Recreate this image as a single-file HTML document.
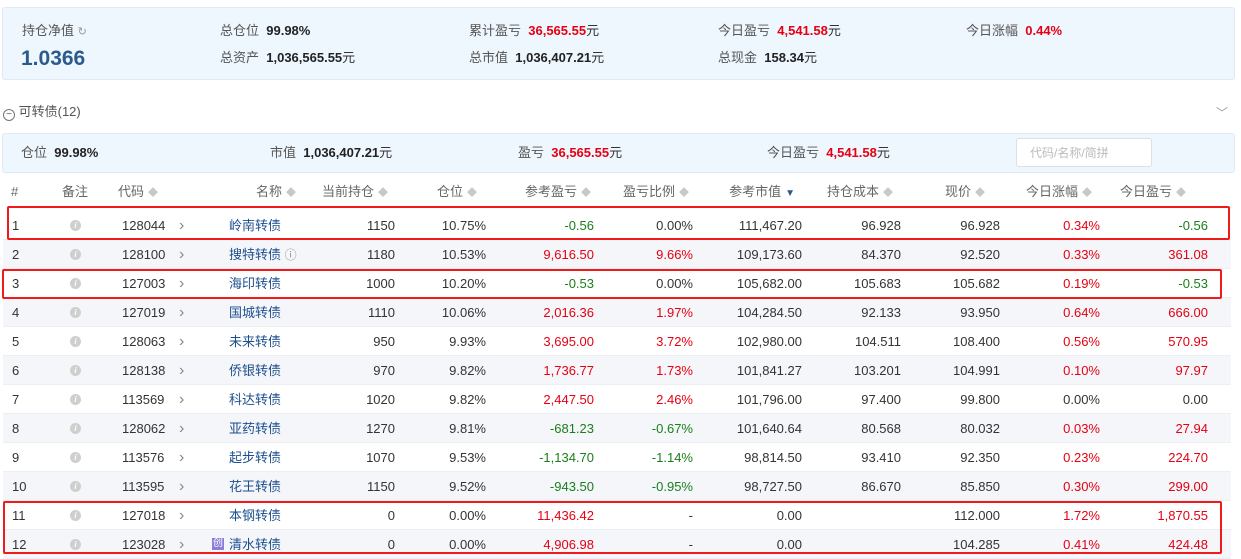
<!DOCTYPE html>
<html><head><meta charset="utf-8"><style>
*{margin:0;padding:0;box-sizing:border-box}
body{width:1241px;height:556px;overflow:hidden;background:#fff;font-family:"Liberation Sans","Noto Sans CJK SC",sans-serif;font-size:13px;color:#333;position:relative;line-height:15px}
.a{position:absolute;white-space:nowrap}
.lb{color:#555}
.b{font-weight:bold;color:#222}
.r{color:#e60012}
.g{color:#1a7f1a}
.panel{position:absolute;background:#eef6fe;border:1px solid #e0ebf5;border-radius:3px}
.row{position:absolute;left:3px;width:1228px;height:29px;border-bottom:1px solid #eceef2}
.row.e{background:#f4f6fa}
.row span{position:absolute;top:7px;white-space:nowrap;line-height:15px}
.rt{text-align:right}
.nm{color:#1d4f8c}
.info{display:block;width:11px;height:11px;border-radius:50%;background:#cfcfcf;color:#fff;font-size:8px;line-height:11px;text-align:center;font-style:italic;font-weight:bold}
.hd{position:absolute;top:184px;color:#666}
.ar{color:#c8c8c8;font-size:10px;margin-left:4px}
.box{position:absolute;border:2px solid #f01a1a;border-radius:2px}
</style></head><body>
<div class="panel" style="left:2px;top:7px;width:1233px;height:73px"></div>
<div class="a lb" style="left:22px;top:23px">持仓净值 <span style="color:#999;font-size:11px">↻</span></div>
<div class="a" style="left:21px;top:47px;font-size:21px;line-height:24px;font-weight:bold;color:#2a5b8c">1.0366</div>
<div class="a" style="left:220px;top:23px"><span class="lb">总仓位</span>&nbsp; <span class="b">99.98%</span></div>
<div class="a" style="left:220px;top:50px"><span class="lb">总资产</span>&nbsp; <span class="b">1,036,565.55</span>元</div>
<div class="a" style="left:469px;top:23px"><span class="lb">累计盈亏</span>&nbsp; <span class="b r">36,565.55</span>元</div>
<div class="a" style="left:469px;top:50px"><span class="lb">总市值</span>&nbsp; <span class="b">1,036,407.21</span>元</div>
<div class="a" style="left:718px;top:23px"><span class="lb">今日盈亏</span>&nbsp; <span class="b r">4,541.58</span>元</div>
<div class="a" style="left:718px;top:50px"><span class="lb">总现金</span>&nbsp; <span class="b">158.34</span>元</div>
<div class="a" style="left:966px;top:23px"><span class="lb">今日涨幅</span>&nbsp; <span class="b r">0.44%</span></div>

<div class="a lb" style="left:3px;top:104px"><span style="display:inline-block;width:12px;height:12px;border:1px solid #777;border-radius:50%;font-size:10px;line-height:9px;text-align:center;vertical-align:-1px">−</span> 可转债(12)</div>
<div class="a" style="left:1216px;top:106px;color:#999;font-size:12px">﹀</div>

<div class="panel" style="left:2px;top:133px;width:1233px;height:40px"></div>
<div class="a" style="left:21px;top:145px"><span class="lb">仓位</span>&nbsp; <span class="b">99.98%</span></div>
<div class="a" style="left:270px;top:145px"><span class="lb">市值</span>&nbsp; <span class="b">1,036,407.21</span>元</div>
<div class="a" style="left:518px;top:145px"><span class="lb">盈亏</span>&nbsp; <span class="b r">36,565.55</span>元</div>
<div class="a" style="left:767px;top:145px"><span class="lb">今日盈亏</span>&nbsp; <span class="b r">4,541.58</span>元</div>
<div class="a" style="left:1016px;top:138px;width:136px;height:29px;background:#fff;border:1px solid #dcdfe6;border-radius:3px;color:#bbb;padding:7px 0 0 13px;font-size:12px">代码/名称/简拼</div>

<div class="hd" style="left:11px">#</div>
<div class="hd" style="left:62px">备注</div>
<div class="hd" style="left:118px">代码<span class="ar">◆</span></div>
<div class="hd rt" style="right:945px">名称<span class="ar">◆</span></div>
<div class="hd rt" style="right:853px">当前持仓<span class="ar">◆</span></div>
<div class="hd rt" style="right:764px">仓位<span class="ar">◆</span></div>
<div class="hd rt" style="right:650px">参考盈亏<span class="ar">◆</span></div>
<div class="hd rt" style="right:552px">盈亏比例<span class="ar">◆</span></div>
<div class="hd rt" style="right:446px">参考市值<span class="ar" style="color:#2a5b8c">▼</span></div>
<div class="hd rt" style="right:348px">持仓成本<span class="ar">◆</span></div>
<div class="hd rt" style="right:256px">现价<span class="ar">◆</span></div>
<div class="hd rt" style="right:149px">今日涨幅<span class="ar">◆</span></div>
<div class="hd rt" style="right:55px">今日盈亏<span class="ar">◆</span></div>

<div id="rows"></div>
<script>
var d=[
["1","128044","岭南转债","1150","10.75%","-0.56","0.00%","111,467.20","96.928","96.928","0.34%","-0.56","g","","r","g"],
["2","128100","搜特转债","1180","10.53%","9,616.50","9.66%","109,173.60","84.370","92.520","0.33%","361.08","r","r","r","r"],
["3","127003","海印转债","1000","10.20%","-0.53","0.00%","105,682.00","105.683","105.682","0.19%","-0.53","g","","r","g"],
["4","127019","国城转债","1110","10.06%","2,016.36","1.97%","104,284.50","92.133","93.950","0.64%","666.00","r","r","r","r"],
["5","128063","未来转债","950","9.93%","3,695.00","3.72%","102,980.00","104.511","108.400","0.56%","570.95","r","r","r","r"],
["6","128138","侨银转债","970","9.82%","1,736.77","1.73%","101,841.27","103.201","104.991","0.10%","97.97","r","r","r","r"],
["7","113569","科达转债","1020","9.82%","2,447.50","2.46%","101,796.00","97.400","99.800","0.00%","0.00","r","r","",""],
["8","128062","亚药转债","1270","9.81%","-681.23","-0.67%","101,640.64","80.568","80.032","0.03%","27.94","g","g","r","r"],
["9","113576","起步转债","1070","9.53%","-1,134.70","-1.14%","98,814.50","93.410","92.350","0.23%","224.70","g","g","r","r"],
["10","113595","花王转债","1150","9.52%","-943.50","-0.95%","98,727.50","86.670","85.850","0.30%","299.00","g","g","r","r"],
["11","127018","本钢转债","0","0.00%","11,436.42","-","0.00","","112.000","1.72%","1,870.55","r","","r","r"],
["12","123028","清水转债","0","0.00%","4,906.98","-","0.00","","104.285","0.41%","424.48","r","","r","r"]];
var h="";
d.forEach(function(x,i){
var t=211+i*29;
h+='<div class="row'+(i%2?' e':'')+'" style="top:'+t+'px">'+
'<span style="left:9px">'+x[0]+'</span>'+
'<span style="left:67px;top:9px"><i class="info">i</i></span>'+
'<span style="left:119px">'+x[1]+'</span>'+
'<span style="left:176px;color:#888;font-size:16px">›</span>'+
(i==11?'<span style="left:209px;top:8px;width:12px;height:12px;background:#8b7fd8;color:#fff;font-size:10px;line-height:12px;text-align:center">创</span>':'')+
'<span class="nm" style="left:226px">'+x[2]+(i==1?' <span style="position:static;color:#888;font-size:12px">ⓘ</span>':'')+'</span>'+
'<span class="rt" style="right:836px">'+x[3]+'</span>'+
'<span class="rt" style="right:745px">'+x[4]+'</span>'+
'<span class="rt '+x[12]+'" style="right:637px">'+x[5]+'</span>'+
'<span class="rt '+x[13]+'" style="right:538px">'+x[6]+'</span>'+
'<span class="rt" style="right:429px">'+x[7]+'</span>'+
'<span class="rt" style="right:330px">'+x[8]+'</span>'+
'<span class="rt" style="right:231px">'+x[9]+'</span>'+
'<span class="rt '+x[14]+'" style="right:131px">'+x[10]+'</span>'+
'<span class="rt '+x[15]+'" style="right:23px">'+x[11]+'</span>'+
'</div>';});
document.getElementById("rows").innerHTML=h;
</script>
<div class="box" style="left:7px;top:206px;width:1223px;height:34px"></div>
<div class="box" style="left:2px;top:269px;width:1220px;height:30px"></div>
<div class="box" style="left:3px;top:501px;width:1219px;height:53px"></div>
</body></html>
